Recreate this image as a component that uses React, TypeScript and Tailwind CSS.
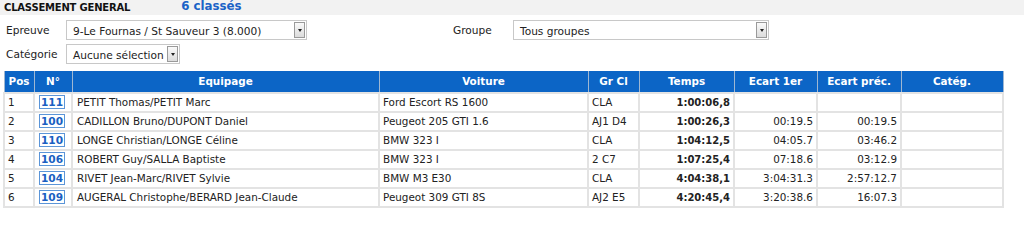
import React from "react";

const rows = [
  { pos: "1", num: "111", eq: "PETIT Thomas/PETIT Marc", car: "Ford Escort RS 1600", gr: "CLA", t: "1:00:06,8", e1: "", ep: "", c: "" },
  { pos: "2", num: "100", eq: "CADILLON Bruno/DUPONT Daniel", car: "Peugeot 205 GTI 1.6", gr: "AJ1 D4", t: "1:00:26,3", e1: "00:19.5", ep: "00:19.5", c: "" },
  { pos: "3", num: "110", eq: "LONGE Christian/LONGE Céline", car: "BMW 323 I", gr: "CLA", t: "1:04:12,5", e1: "04:05.7", ep: "03:46.2", c: "" },
  { pos: "4", num: "106", eq: "ROBERT Guy/SALLA Baptiste", car: "BMW 323 I", gr: "2 C7", t: "1:07:25,4", e1: "07:18.6", ep: "03:12.9", c: "" },
  { pos: "5", num: "104", eq: "RIVET Jean-Marc/RIVET Sylvie", car: "BMW M3 E30", gr: "CLA", t: "4:04:38,1", e1: "3:04:31.3", ep: "2:57:12.7", c: "" },
  { pos: "6", num: "109", eq: "AUGERAL Christophe/BERARD Jean-Claude", car: "Peugeot 309 GTI 8S", gr: "AJ2 E5", t: "4:20:45,4", e1: "3:20:38.6", ep: "16:07.3", c: "" },
];

function Select({ value, width }: { value: string; width: string }) {
  return (
    <div className={`flex items-stretch h-[20px] border border-[#c8c8c8] bg-white ${width}`}>
      <div className="flex-1 pl-[6px] pt-[1px] leading-[18px] text-[10.6px] text-[#222] whitespace-nowrap overflow-hidden">{value}</div>
      <div className="w-[11px] my-[1px] mr-[1px] border border-[#9a9a9a] bg-gradient-to-b from-[#fafafa] to-[#dcdcdc] flex items-center justify-center">
        <div className="w-0 h-0 border-l-[2.5px] border-r-[2.5px] border-t-[3px] border-l-transparent border-r-transparent border-t-[#222]" />
      </div>
    </div>
  );
}

export default function App() {
  const th = "bg-[#0c65c6] text-white font-bold text-[10.4px] text-center h-[22px] border-x border-[#9fb7d2] p-0";
  const td = "border-2 border-[#e3e3e3] h-[19px] px-[3px] py-0 text-[10.4px] text-[#222] whitespace-nowrap overflow-hidden";
  return (
    <div className="w-[1024px] h-[241px] bg-white" style={{ fontFamily: '"DejaVu Sans", Verdana, sans-serif' }}>
      <div className="h-[15px] bg-[#f2f2f2] flex items-end pb-[2px] pl-[4px]">
        <span className="text-[10px] leading-[11px] font-bold text-[#111] tracking-[-0.2px]">CLASSEMENT GENERAL</span>
        <span className="ml-[51px] text-[11.8px] leading-[13px] font-bold text-[#1b63c7]">6 classés</span>
      </div>
      <div className="flex items-center mt-[5px] h-[20px]">
        <span className="w-[66px] pl-[6px] pt-[2px] text-[10.6px] text-[#222]">Epreuve</span>
        <Select value="9-Le Fournas / St Sauveur 3 (8.000)" width="w-[241px]" />
        <span className="ml-[146px] w-[60px] pt-[2px] text-[10.6px] text-[#222]">Groupe</span>
        <Select value="Tous groupes" width="w-[256px]" />
      </div>
      <div className="flex items-center mt-[4px] h-[20px]">
        <span className="w-[66px] pl-[6px] pt-[2px] text-[10.6px] text-[#222]">Catégorie</span>
        <Select value="Aucune sélection" width="w-[114px]" />
      </div>
      <div className="pl-[3px] mt-[7px]">
        <table className="table-fixed border-collapse w-[999px]">
          <colgroup>
            <col className="w-[30px]" />
            <col className="w-[38px]" />
            <col className="w-[307px]" />
            <col className="w-[209px]" />
            <col className="w-[51px]" />
            <col className="w-[95px]" />
            <col className="w-[83px]" />
            <col className="w-[84px]" />
            <col className="w-[102px]" />
          </colgroup>
          <thead>
            <tr>
              <th className={th}>Pos</th>
              <th className={th}>N°</th>
              <th className={th}>Equipage</th>
              <th className={th}>Voiture</th>
              <th className={th}>Gr Cl</th>
              <th className={th}>Temps</th>
              <th className={th}>Ecart 1er</th>
              <th className={th}>Ecart préc.</th>
              <th className={th}>Catég.</th>
            </tr>
          </thead>
          <tbody>
            {rows.map((r) => (
              <tr key={r.pos}>
                <td className={td}>{r.pos}</td>
                <td className={`${td} px-0`}>
                  <span className="ml-[1px] inline-block border border-[#5b95d8] px-[1px] leading-[12px] text-[10.6px] font-bold text-[#1a5fc2]">{r.num}</span>
                </td>
                <td className={`${td} pl-[4px]`}>{r.eq}</td>
                <td className={`${td} pl-[3px]`}>{r.car}</td>
                <td className={td}>{r.gr}</td>
                <td className={`${td} text-right font-bold text-[10px]`}>{r.t}</td>
                <td className={`${td} text-right`}>{r.e1}</td>
                <td className={`${td} text-right`}>{r.ep}</td>
                <td className={td}>{r.c}</td>
              </tr>
            ))}
          </tbody>
        </table>
      </div>
    </div>
  );
}
